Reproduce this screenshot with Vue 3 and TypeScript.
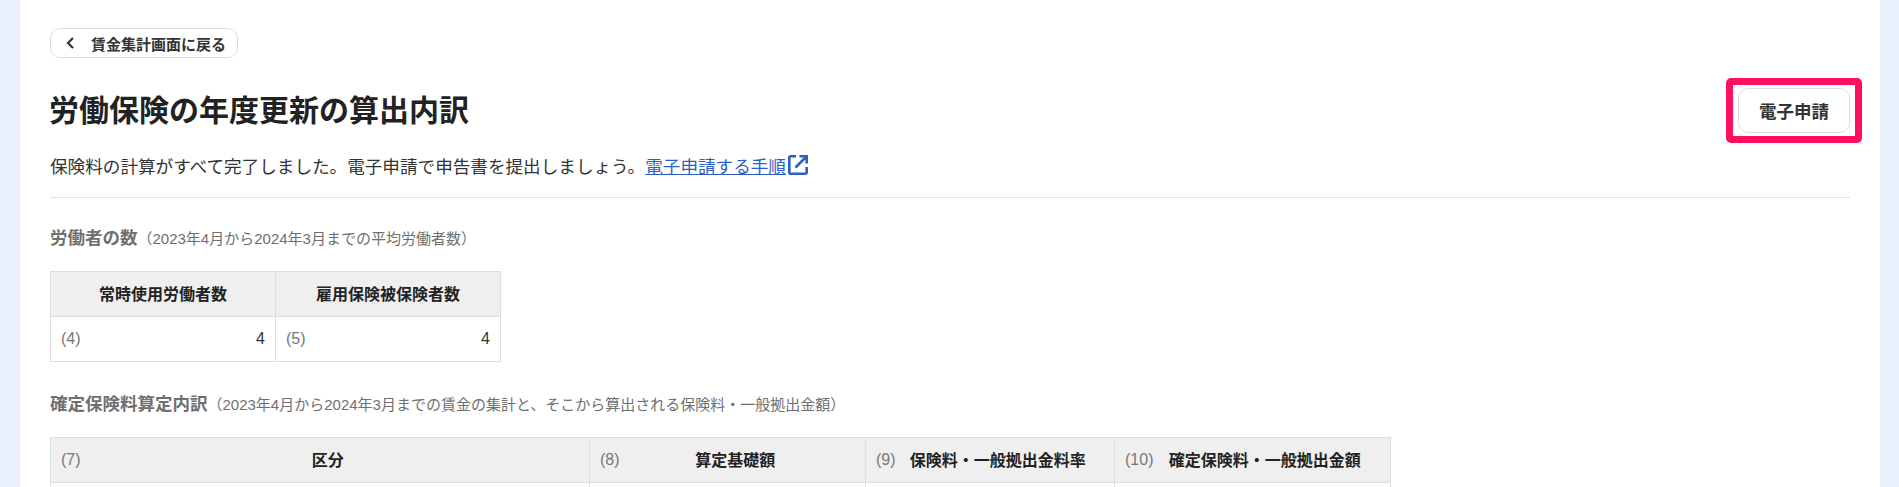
<script setup lang="ts">
const headcounts = [
  { no: '(4)', label: '常時使用労働者数', value: '4' },
  { no: '(5)', label: '雇用保険被保険者数', value: '4' }
]

const columns = [
  { no: '(7)', label: '区分', cls: 'col-a' },
  { no: '(8)', label: '算定基礎額', cls: 'col-b' },
  { no: '(9)', label: '保険料・一般拠出金料率', cls: 'col-c' },
  { no: '(10)', label: '確定保険料・一般拠出金額', cls: 'col-d' }
]
</script>

<template>
  <div class="page">
    <main class="panel">
      <a class="back-button" href="#">
        <svg class="back-icon" width="10" height="12" viewBox="0 0 10 12" aria-hidden="true">
          <path d="M8 1 3 6l5 5" fill="none" stroke="currentColor" stroke-width="2.200" />
        </svg>
        <span>賃金集計画面に戻る</span>
      </a>

      <div class="title-row">
        <h1 class="title">労働保険の年度更新の算出内訳</h1>
        <button class="primary-action" type="button">電子申請</button>
      </div>

      <p class="lead">
        保険料の計算がすべて完了しました。電子申請で申告書を提出しましょう。<a class="link" href="#">電子申請する手順</a>
        <svg class="external" width="20" height="20" viewBox="0 0 20 20" aria-hidden="true">
          <path d="M8 1.300H2.500A1.200 1.200 0 0 0 1.300 2.500v15a1.200 1.200 0 0 0 1.200 1.200h15a1.200 1.200 0 0 0 1.200-1.200V12" fill="none" stroke="currentColor" stroke-width="2.600" />
          <path d="M11.500 1.300h7.200v7.200M18 2 7.500 12.500" fill="none" stroke="currentColor" stroke-width="2.600" />
        </svg>
      </p>

      <hr class="divider" />

      <h2 class="section-title">労働者の数<small>（2023年4月から2024年3月までの平均労働者数）</small></h2>
      <table class="table table-small">
        <thead>
          <tr>
            <th v-for="item in headcounts" :key="item.no">{{ item.label }}</th>
          </tr>
        </thead>
        <tbody>
          <tr>
            <td v-for="item in headcounts" :key="item.no">
              <div class="cell-value">
                <span class="no">{{ item.no }}</span>
                <span class="num">{{ item.value }}</span>
              </div>
            </td>
          </tr>
        </tbody>
      </table>

      <h2 class="section-title second">確定保険料算定内訳<small>（2023年4月から2024年3月までの賃金の集計と、そこから算出される保険料・一般拠出金額）</small></h2>
      <table class="table table-wide">
        <thead>
          <tr>
            <th v-for="col in columns" :key="col.no" :class="col.cls">
              <div class="head-cell">
                <span class="no">{{ col.no }}</span>
                <span class="head-label">{{ col.label }}</span>
              </div>
            </th>
          </tr>
        </thead>
        <tbody>
          <tr>
            <td v-for="col in columns" :key="col.no" class="empty"></td>
          </tr>
        </tbody>
      </table>

      <div class="highlight"></div>
    </main>
  </div>
</template>

<style>
html,
body {
  margin: 0;
  height: 100%;
  overflow: hidden;
}
</style>

<style scoped>
.page {
  background: #eaf1fd;
  padding: 0 19px 0 20px;
  height: 487px;
  overflow: hidden;
  font-family: "Liberation Sans", "Noto Sans CJK JP", sans-serif;
  color: #333;
}

.panel {
  position: relative;
  background: #fff;
  padding: 28px 30px 40px;
}

.back-button {
  display: inline-flex;
  align-items: center;
  box-sizing: border-box;
  width: 188px;
  height: 30px;
  padding-left: 14px;
  border: 1px solid #dcdcdc;
  border-radius: 10px;
  color: #333;
  font-size: 15px;
  font-weight: 700;
  text-decoration: none;
}

.back-icon {
  margin-right: 16px;
}

.title-row {
  display: flex;
  align-items: center;
  justify-content: space-between;
  margin-top: 30px;
}

.title {
  margin: 0 0 0 -1px;
  font-size: 30px;
  font-weight: 700;
  line-height: 44px;
  color: #222;
}

.primary-action {
  box-sizing: border-box;
  width: 112px;
  height: 45px;
  border: 1px solid #dcdcdc;
  border-radius: 10px;
  background: #fff;
  color: #333;
  font-family: inherit;
  font-size: 17.500px;
  font-weight: 700;
}

.lead {
  display: flex;
  align-items: center;
  margin: 19px 0 0;
  height: 26px;
  font-size: 17.600px;
  color: #333;
}

.link {
  color: #2b5fc7;
  text-decoration: underline;
}

.external {
  margin-left: 2px;
  color: #2b5fc7;
}

.divider {
  margin: 19px 0 0;
  border: 0;
  border-top: 1px solid #e2e2e2;
}

.section-title {
  margin: 28px 0 0;
  font-size: 17.500px;
  line-height: 24px;
  font-weight: 700;
  color: #6f6f6f;
}

.section-title small {
  font-size: 15px;
  font-weight: 400;
}

.section-title.second {
  margin-top: 30px;
}

.table {
  margin-top: 20px;
  border-collapse: collapse;
  table-layout: fixed;
  font-size: 16px;
}

.table th,
.table td {
  box-sizing: border-box;
  border: 1px solid #dedede;
  padding: 0 10px;
}

.table th {
  height: 45px;
  padding-bottom: 2px;
  background: #efefef;
  color: #222;
  font-weight: 700;
  text-align: center;
}

.table td {
  height: 45px;
}

.table-small {
  width: 451px;
}

.table-wide {
  width: 1340px;
}

.col-a {
  width: 539px;
}

.col-b {
  width: 276px;
}

.col-c {
  width: 249px;
}

.col-d {
  width: 276px;
}

.cell-value {
  display: flex;
  align-items: center;
  justify-content: space-between;
}

.no {
  color: #777;
  font-size: 16px;
  font-weight: 400;
}

.num {
  font-size: 16px;
  color: #333;
}

.head-cell {
  display: flex;
  align-items: center;
  padding-right: 4px;
}

.head-cell .no {
  margin-top: 2px;
}

.head-label {
  flex: 1;
  text-align: center;
}

.highlight {
  position: absolute;
  left: 1706px;
  top: 78px;
  box-sizing: border-box;
  width: 136px;
  height: 65px;
  border: 7px solid #ff0f5c;
  border-radius: 5px;
}
</style>
